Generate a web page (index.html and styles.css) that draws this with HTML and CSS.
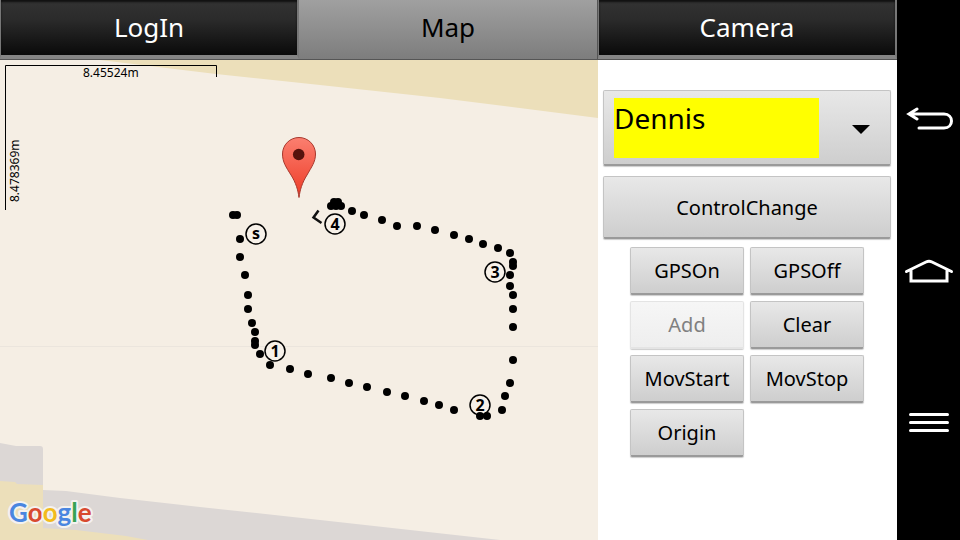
FILE: index.html
```
<!DOCTYPE html>
<html lang="en">
<head>
    <meta charset="UTF-8">
    <meta name="viewport" content="width=device-width, initial-scale=1.0">
    <title>Map Control</title>
    <link rel="stylesheet" href="styles.css">
</head>
<body>
    <div class="app">
        <!-- Tabs -->
        <nav class="tabs">
            <button class="tab">LogIn</button>
            <button class="tab active">Map</button>
            <button class="tab">Camera</button>
        </nav>

        <div class="content">
            <!-- Map -->
            <main class="map">
                <svg viewBox="0 60 598 480" preserveAspectRatio="xMinYMin slice" role="img" aria-label="Map with recorded track">
                    <defs>
                        <linearGradient id="pinFill" x1="0" y1="0" x2="0" y2="1">
                            <stop offset="0" stop-color="#fb7f70"/>
                            <stop offset="1" stop-color="#ee3b26"/>
                        </linearGradient>
                    </defs>

                    <!-- Ground -->
                    <path fill="#ecdfba" d="M100 60H598V118L440 98L320 85L216 74Z"/>
                    <path fill="#dcd7d5" d="M0 443L16 446H40Q43 446 43 449V490L66 491L120 498L200 507L320 520L500 540H0Z"/>
                    <path fill="#ecdfba" d="M0 481L15 482L17 484L43 485V528L76 530L126 536L148 540H0Z"/>
                    <path class="seam" d="M0 346.500H598"/>

                    <!-- Scale -->
                    <path class="scale-line" d="M5.500 210V65.500H216.500V77"/>
                    <text class="scale-text" x="83" y="77">8.45524m</text>
                    <text class="scale-text" transform="translate(19 202) rotate(-90)">8.478369m</text>

                    <!-- Track -->
                    <g class="track">
                        <circle cx="233" cy="215" r="4"/><circle cx="237" cy="215" r="4"/>
                        <circle cx="240" cy="239" r="4"/><circle cx="240" cy="257" r="4"/>
                        <circle cx="245" cy="275" r="4"/><circle cx="248" cy="295" r="4"/>
                        <circle cx="248" cy="309" r="4"/><circle cx="252" cy="323" r="4"/>
                        <circle cx="255" cy="332" r="4"/><circle cx="255" cy="341" r="4"/>
                        <circle cx="255" cy="345" r="4"/><circle cx="260" cy="354" r="4"/>
                        <circle cx="270" cy="365" r="4"/><circle cx="290" cy="369" r="4"/>
                        <circle cx="308" cy="374" r="4"/><circle cx="331" cy="378" r="4"/>
                        <circle cx="349" cy="383" r="4"/><circle cx="367" cy="387" r="4"/>
                        <circle cx="387" cy="392" r="4"/><circle cx="405" cy="396" r="4"/>
                        <circle cx="424" cy="401" r="4"/><circle cx="439" cy="405" r="4"/>
                        <circle cx="454" cy="410" r="4"/><circle cx="502" cy="410" r="4"/>
                        <circle cx="505" cy="396" r="4"/><circle cx="510" cy="383" r="4"/>
                        <circle cx="513" cy="360" r="4"/><circle cx="513" cy="327" r="4"/>
                        <circle cx="513" cy="309" r="4"/><circle cx="513" cy="295" r="4"/>
                        <circle cx="510" cy="286" r="4"/><circle cx="510" cy="275" r="4"/>
                        <circle cx="513" cy="266" r="4"/><circle cx="513" cy="262" r="4"/>
                        <circle cx="510" cy="253" r="4"/><circle cx="498" cy="248" r="4"/>
                        <circle cx="483" cy="244" r="4"/><circle cx="469" cy="239" r="4"/>
                        <circle cx="454" cy="235" r="4"/><circle cx="435" cy="230" r="4"/>
                        <circle cx="417" cy="226" r="4"/><circle cx="397" cy="226" r="4"/>
                        <circle cx="382" cy="220" r="4"/><circle cx="364" cy="215" r="4"/>
                        <circle cx="352" cy="211" r="4"/><circle cx="341" cy="206" r="4"/>
                        <circle cx="338" cy="202" r="4"/><circle cx="334" cy="202" r="4"/>
                        <circle cx="336" cy="206" r="4"/><circle cx="331" cy="206" r="4"/>
                    </g>
                    <path class="heading" d="M318.500 210.500L313.500 217.500L321.500 223"/>

                    <!-- Waypoints -->
                    <g class="waypoint">
                        <circle cx="256" cy="234" r="10"/><text x="256" y="239">s</text>
                        <circle cx="275" cy="351" r="10"/><text x="275" y="357">1</text>
                        <circle cx="480" cy="405" r="10"/><text x="480" y="411">2</text>
                        <circle cx="495" cy="272" r="10"/><text x="495" y="278">3</text>
                        <circle cx="335" cy="224" r="10"/><text x="335" y="230">4</text>
                    </g>
                    <g class="track">
                        <circle cx="480" cy="416" r="4"/><circle cx="487" cy="416" r="4"/>
                    </g>

                    <!-- Pin -->
                    <path class="pin" fill="url(#pinFill)" d="M299 197.500C298 190 296 183 291 175C286 167 282.500 162 282.500 154A16.500 16.500 0 0 1 315.500 154C315.500 162 311.500 167 307 175C302 183 300 190 299 197.500Z"/>
                    <circle cx="298.700" cy="154.500" r="5.800" fill="#56130d"/>

                    <text class="logo" x="9" y="522"><tspan class="blue">G</tspan><tspan class="red">o</tspan><tspan class="yellow">o</tspan><tspan class="blue">g</tspan><tspan class="green">l</tspan><tspan class="red">e</tspan></text>
                </svg>
            </main>

            <!-- Controls -->
            <aside class="controls">
                <div class="spinner">
                    <select id="user" aria-label="User">
                        <option>Dennis</option>
                    </select>
                </div>
                <button class="btn wide">ControlChange</button>
                <div class="btn-grid">
                    <button class="btn">GPSOn</button>
                    <button class="btn">GPSOff</button>
                    <button class="btn" disabled>Add</button>
                    <button class="btn">Clear</button>
                    <button class="btn">MovStart</button>
                    <button class="btn">MovStop</button>
                    <button class="btn">Origin</button>
                </div>
            </aside>
        </div>
    </div>

    <!-- System keys -->
    <nav class="sysbar">
        <button class="key" aria-label="Back">
            <svg width="50" height="28" viewBox="0 0 50 28"><path d="M5 7H40C50 7 50 21 40 21H15M13 2L5 7L13 12"/></svg>
        </button>
        <button class="key" aria-label="Home">
            <svg width="50" height="28" viewBox="0 0 50 28"><path d="M2.500 13.500L22 4Q25 2.500 28 4L47.500 13.500M7 12V23H43V12"/></svg>
        </button>
        <button class="key" aria-label="Menu">
            <svg width="50" height="28" viewBox="0 0 50 28"><path d="M6.500 5.500H43.500M6.500 13.500H43.500M6.500 21.500H43.500"/></svg>
        </button>
    </nav>
</body>
</html>
```
FILE: styles.css
```
* {
    box-sizing: border-box;
}

body {
    margin: 0;
    display: flex;
    min-height: 100vh;
    background: #000;
    font-family: "Noto Sans", "Open Sans", sans-serif;
}

button {
    font-family: inherit;
    cursor: pointer;
}

.app {
    flex: 1;
    display: flex;
    flex-direction: column;
    background: #fff;
}

/* tabs */
.tabs {
    display: grid;
    grid-template-columns: repeat(3, 1fr);
    height: 60px;
}

.tab {
    border: 1px solid #777;
    border-width: 0 2px 4px 1px;
    border-bottom-color: #858585;
    box-shadow: inset 0 2px 2px #111, 0 1px 0 #555;
    margin: 0 0 1px;
    padding: 0 0 2px;
    background: linear-gradient(#333, #2b2b2b 35%, #0a0a0a);
    color: #fff;
    font-size: 26px;
}

.tab.active {
    border-width: 0 1px 0 0;
    border-color: #555;
    box-shadow: 0 1px 0 #555;
    padding-bottom: 6px;
    background: linear-gradient(#a0a0a0, #7d7d7d);
    color: #000;
}

.content {
    flex: 1;
    display: grid;
    grid-template-columns: 2fr 1fr;
}

/* map */
.map {
    position: relative;
    overflow: hidden;
    background: #f5eee4;
}

.map svg {
    position: absolute;
    width: 100%;
    height: 100%;
}

.seam {
    stroke: #ebe5dd;
}

.scale-line {
    fill: none;
    stroke: #000;
}

.scale-text {
    font-size: 12px;
}

.heading {
    fill: none;
    stroke: #111;
    stroke-width: 2.5;
}

.waypoint circle {
    fill: #f7f1e9;
    stroke: #000;
    stroke-width: 1.5;
}

.waypoint text {
    font-size: 16px;
    font-weight: bold;
    text-anchor: middle;
}

.pin {
    stroke: #a8392e;
}

.logo {
    font-family: Lato, sans-serif;
    font-size: 26px;
    font-weight: bold;
    stroke: #f4f2f0;
    stroke-width: 4px;
    stroke-linejoin: round;
    paint-order: stroke;
}

.blue {
    fill: #4a86e0;
}

.red {
    fill: #d8492f;
}

.yellow {
    fill: #f2bb1d;
}

.green {
    fill: #38a353;
}

/* controls */
.controls {
    display: flex;
    flex-direction: column;
    padding: 30px 6px 0 5px;
}

.spinner,
.btn {
    border: 1px solid #c4c4c4;
    border-bottom: 2px solid #9a9a9a;
    border-radius: 2px;
    background: linear-gradient(#e8e8e8, #cecece);
    box-shadow: 0 1px 1px #ccc;
}

.spinner {
    display: flex;
    align-items: center;
    gap: 33px;
    height: 76px;
    padding: 0 20px 0 10px;
}

.spinner::after {
    content: "";
    border: 9px solid transparent;
    border-top-color: #000;
    border-bottom: 0;
    margin-top: 4px;
}

.spinner select {
    flex: 1;
    height: 60px;
    appearance: none;
    border: 0;
    border-radius: 0;
    padding: 0 0 20px;
    background: #ff0;
    color: #000;
    font-family: inherit;
    font-size: 28px;
}

.btn {
    height: 48px;
    padding: 0;
    color: #000;
    font-size: 20px;
}

.btn:disabled {
    border-color: #e4e4e4;
    background: linear-gradient(#f6f6f6, #eee);
    color: #808080;
}

.btn.wide {
    height: 63px;
    margin: 10px 0 8px;
}

.btn-grid {
    display: grid;
    grid-template-columns: 1fr 1fr;
    gap: 6px;
    padding: 0 27px;
}

/* system keys */
.sysbar {
    display: flex;
    flex-direction: column;
    align-items: center;
    justify-content: center;
    gap: 123px;
    width: 63px;
    padding-top: 3px;
}

.key {
    display: flex;
    border: 0;
    padding: 0;
    background: none;
}

.key path {
    fill: none;
    stroke: #fff;
    stroke-width: 3;
    stroke-linecap: round;
}
```
